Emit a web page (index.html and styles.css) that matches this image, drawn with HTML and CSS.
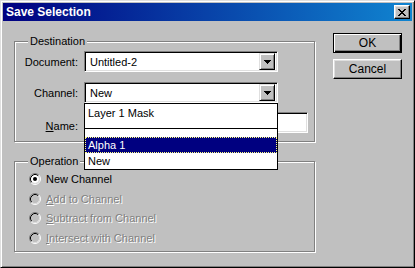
FILE: index.html
```html
<!DOCTYPE html>
<html>
<head>
<meta charset="utf-8">
<link rel="stylesheet" href="styles.css">
</head>
<body>
<div class="window">
  <div class="titlebar">
    <span class="title">Save Selection</span>
    <span class="close"><svg width="8" height="7" viewBox="0 0 8 7"><path d="M0 0h2v1h1v1h2v-1h1v-1h2v1h-1v1h-1v1h-1v1h1v1h1v1h1v1h-2v-1h-1v-1h-2v1h-1v1h-2v-1h1v-1h1v-1h1v-1h-1v-1h-1v-1h-1z" fill="#000"/></svg></span>
  </div>
  <div class="content">
    <div class="groups">
      <div class="group dest">
        <span class="legend">Destination</span>
        <div class="row gap0">
          <span class="lbl">Document:</span>
          <div class="combo">
            <span class="value">Untitled-2</span>
            <span class="drop"><svg width="7" height="4" viewBox="0 0 7 4"><path d="M0 0h7v1h-1v1h-1v1h-1v1h-1v-1h-1v-1h-1v-1h-1z" fill="#000"/></svg></span>
          </div>
        </div>
        <div class="row gap1">
          <span class="lbl">Channel:</span>
          <div class="combo">
            <span class="value">New</span>
            <span class="drop"><svg width="7" height="4" viewBox="0 0 7 4"><path d="M0 0h7v1h-1v1h-1v1h-1v1h-1v-1h-1v-1h-1v-1h-1z" fill="#000"/></svg></span>
            <ul class="list">
              <li class="item first">Layer 1 Mask</li>
              <li class="sep"></li>
              <li class="item selected">Alpha 1</li>
              <li class="item">New</li>
            </ul>
          </div>
        </div>
        <div class="row gap2">
          <span class="lbl name"><u>N</u>ame:</span>
          <div class="textbox"></div>
        </div>
      </div>
      <div class="group op">
        <span class="legend">Operation</span>
        <div class="radio first">
          <svg class="rb" width="12" height="12" viewBox="0 0 12 12"><path d="M2.11 9.89A5.5 5.5 0 0 1 9.89 2.11" stroke="#808080" fill="none"/><path d="M9.89 2.11A5.5 5.5 0 0 1 2.11 9.89" stroke="#fff" fill="none"/><circle cx="6" cy="6" r="4" fill="#fff"/><path d="M2.82 9.18A4.5 4.5 0 0 1 9.18 2.82" stroke="#000" fill="none"/><path d="M9.18 2.82A4.5 4.5 0 0 1 2.82 9.18" stroke="#dfdfdf" fill="none"/><circle cx="6" cy="6" r="2" fill="#000"/></svg>
          <span>New Channel</span>
        </div>
        <div class="radio disabled">
          <svg class="rb" width="12" height="12" viewBox="0 0 12 12"><path d="M2.11 9.89A5.5 5.5 0 0 1 9.89 2.11" stroke="#808080" fill="none"/><path d="M9.89 2.11A5.5 5.5 0 0 1 2.11 9.89" stroke="#fff" fill="none"/><circle cx="6" cy="6" r="4" fill="#c0c0c0"/><path d="M2.82 9.18A4.5 4.5 0 0 1 9.18 2.82" stroke="#000" fill="none"/><path d="M9.18 2.82A4.5 4.5 0 0 1 2.82 9.18" stroke="#dfdfdf" fill="none"/></svg>
          <span><u>A</u>dd to Channel</span>
        </div>
        <div class="radio disabled">
          <svg class="rb" width="12" height="12" viewBox="0 0 12 12"><path d="M2.11 9.89A5.5 5.5 0 0 1 9.89 2.11" stroke="#808080" fill="none"/><path d="M9.89 2.11A5.5 5.5 0 0 1 2.11 9.89" stroke="#fff" fill="none"/><circle cx="6" cy="6" r="4" fill="#c0c0c0"/><path d="M2.82 9.18A4.5 4.5 0 0 1 9.18 2.82" stroke="#000" fill="none"/><path d="M9.18 2.82A4.5 4.5 0 0 1 2.82 9.18" stroke="#dfdfdf" fill="none"/></svg>
          <span><u>S</u>ubtract from Channel</span>
        </div>
        <div class="radio disabled">
          <svg class="rb" width="12" height="12" viewBox="0 0 12 12"><path d="M2.11 9.89A5.5 5.5 0 0 1 9.89 2.11" stroke="#808080" fill="none"/><path d="M9.89 2.11A5.5 5.5 0 0 1 2.11 9.89" stroke="#fff" fill="none"/><circle cx="6" cy="6" r="4" fill="#c0c0c0"/><path d="M2.82 9.18A4.5 4.5 0 0 1 9.18 2.82" stroke="#000" fill="none"/><path d="M9.18 2.82A4.5 4.5 0 0 1 2.82 9.18" stroke="#dfdfdf" fill="none"/></svg>
          <span><u>I</u>ntersect with Channel</span>
        </div>
      </div>
    </div>
    <div class="buttons">
      <div class="btn default"><span>OK</span></div>
      <div class="btn"><span>Cancel</span></div>
    </div>
  </div>
</div>
</body>
</html>
```

FILE: styles.css
```css
* { box-sizing: border-box; }
html, body { margin: 0; padding: 0; }
body {
  background: #c0c0c0;
  font-family: "Liberation Sans", Arial, sans-serif;
  font-size: 11px;
  color: #000;
}
.window {
  width: 415px;
  height: 268px;
  background: #c0c0c0;
  border: 1px solid;
  border-color: #dfdfdf #000 #000 #dfdfdf;
  box-shadow: inset 1px 1px #fff, inset -1px -1px #808080;
  padding: 2px;
}
.titlebar {
  height: 18px;
  background: linear-gradient(to right, #000080, #1084d0);
  display: flex;
  align-items: center;
  justify-content: space-between;
  padding: 0 2px 0 3px;
}
.title {
  color: #fff;
  font-weight: bold;
  font-size: 12px;
  line-height: 18px;
}
.close {
  width: 16px;
  height: 14px;
  background: #c0c0c0;
  border: 1px solid;
  border-color: #fff #000 #000 #fff;
  box-shadow: inset -1px -1px #808080, inset 1px 1px #dfdfdf;
  display: flex;
  align-items: center;
  justify-content: center;
}
.close svg { display: block; margin-left: -1px; }
.content {
  display: flex;
  align-items: flex-start;
  padding-left: 11px;
}
.groups {
  padding-top: 20px;
  width: 301px;
}
.group {
  border: 1px solid #808080;
  box-shadow: inset 1px 1px #fff, 1px 1px #fff;
}
.dest { height: 101px; }
.op { height: 91px; margin-top: 19px; padding-left: 14px; }
.legend {
  display: block;
  width: fit-content;
  height: 13px;
  line-height: 13px;
  margin: -7px 0 -6px 13px;
  padding: 0 2px;
  background: #c0c0c0;
  position: relative;
  z-index: 1;
}
.op .legend { margin-left: -1px; }
.row {
  display: flex;
  align-items: center;
  height: 21px;
}
.gap0 { margin-top: 9px; }
.gap1 { margin-top: 10px; position: relative; z-index: 5; }
.gap2 { margin-top: 9px; }
.lbl {
  width: 63px;
  text-align: right;
  margin-right: 6px;
}
.lbl.name { position: relative; top: 3px; }
.combo {
  position: relative;
  width: 194px;
  height: 21px;
  background: #fff;
  border: 1px solid;
  border-color: #808080 #fff #fff #808080;
  box-shadow: inset 1px 1px #000, inset -1px -1px #dfdfdf;
  padding: 2px;
  display: flex;
  align-items: center;
  justify-content: space-between;
}
.value { padding-left: 3px; }
.drop {
  width: 16px;
  height: 17px;
  background: #c0c0c0;
  border: 1px solid;
  border-color: #dfdfdf #000 #000 #dfdfdf;
  box-shadow: inset 1px 1px #fff, inset -1px -1px #808080;
  display: flex;
  align-items: center;
  justify-content: center;
}
.drop svg { display: block; }
.textbox {
  width: 224px;
  height: 21px;
  background: #fff;
  border: 1px solid;
  border-color: #808080 #fff #fff #808080;
  box-shadow: inset 1px 1px #000, inset -1px -1px #dfdfdf;
}
.list {
  position: absolute;
  left: -1px;
  top: 20px;
  width: 194px;
  margin: 0;
  padding: 0;
  list-style: none;
  background: #fff;
  border: 1px solid #000;
}
.item {
  height: 16px;
  line-height: 16px;
  padding-left: 3px;
}
.item.first { height: 17px; line-height: 15px; padding-top: 2px; }
.sep {
  height: 16px;
  padding-top: 7px;
}
.sep::before {
  content: "";
  display: block;
  height: 1px;
  background: #000;
}
.item.selected {
  background: #000080;
  color: #fff;
  border: 1px dotted #ffff80;
  line-height: 14px;
  padding-left: 2px;
}
.radio {
  display: flex;
  align-items: center;
  height: 19.5px;
}
.radio.first { margin-top: 7.5px; }
.rb { display: block; margin-right: 5px; flex: none; }
.disabled span {
  color: #808080;
  text-shadow: 1px 1px 0 #fff;
}
.buttons {
  margin-left: 18px;
  padding-top: 12px;
  display: flex;
  flex-direction: column;
  gap: 6px;
}
.btn {
  width: 69px;
  height: 20px;
  border: 1px solid;
  border-color: #fff #000 #000 #fff;
  box-shadow: inset -1px -1px #808080, inset 1px 1px #dfdfdf;
  display: flex;
  align-items: center;
  justify-content: center;
  font-size: 12px;
}
.btn.default {
  border: 1px solid #000;
  box-shadow: inset 1px 1px #fff, inset -1px -1px #000, inset -2px -2px #808080;
}
```
